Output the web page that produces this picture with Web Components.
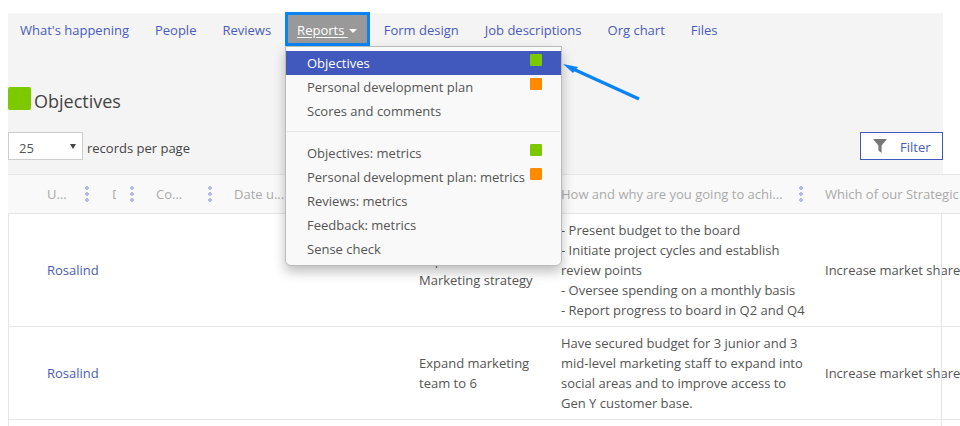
<!DOCTYPE html>
<html>
<head>
<meta charset="utf-8">
<title>Objectives</title>
<style>
	body { margin: 0; background: #fff; font-family: "Open Sans", sans-serif; font-size: 13px; color: #555; }
</style>
</head>
<body>
<app-page>
	<top-panel>
		<top-nav></top-nav>
		<page-title>Objectives</page-title>
		<list-toolbar></list-toolbar>
	</top-panel>
	<objectives-table></objectives-table>
	<reports-menu></reports-menu>
</app-page>

<script>
function define(name, html) {
	customElements.define(name, class extends HTMLElement {
		constructor() {
			super()
			this.attachShadow({ mode: 'open' }).innerHTML = html
		}
	})
}

define('app-page', `
	<style>
		:host { display: block; position: relative; width: 960px; height: 426px; box-sizing: border-box; padding-top: 13px; overflow: hidden; }
	</style>
	<slot></slot>
`)

define('top-panel', `
	<style>
		:host { display: block; margin: 0 17px 0 8px; height: 161px; background: #f4f4f4; }
	</style>
	<slot></slot>
`)

define('top-nav', `
	<style>
		:host { display: flex; height: 33px; align-items: flex-start; }
		a { color: #4a5cbb; padding: 0 13px 0 12px; margin-right: 1px; line-height: 35px; white-space: nowrap; }
		a.open { box-sizing: border-box; height: 34px; margin: -1px 2px 0 0; padding: 0 10px 0 9px; line-height: 31px; background: #999; color: #fff; border: 3px solid #0a84f5; }
		a.open u { text-underline-offset: 2px; }
		i { display: inline-block; border: 4px solid transparent; border-top-color: #fff; border-bottom: 0; vertical-align: 2px; margin-left: 1px; }
	</style>
	<a>What's happening</a><a>People</a><a>Reviews</a>
	<a class="open"><u>Reports&nbsp;<i></i></u></a>
	<a>Form design</a><a>Job descriptions</a><a>Org chart</a><a>Files</a>
`)

define('page-title', `
	<style>
		:host { display: flex; align-items: flex-start; gap: 3px; height: 24px; margin-top: 40px; font-size: 18px; line-height: 24px; color: #444; }
		b { width: 23px; height: 23px; margin-top: 1px; border-radius: 2px; background: #7dc900; }
		span { padding-top: 3px; }
	</style>
	<b></b><span><slot></slot></span>
`)

define('list-toolbar', `
	<style>
		:host { display: flex; align-items: center; height: 28px; margin-top: 22px; color: #444; }
		#select { box-sizing: border-box; width: 75px; height: 28px; display: flex; justify-content: space-between; align-items: center; padding: 0 6px 0 10px; background: #fff; border: 1px solid #ccc; color: #555; }
		#select span { padding-top: 4px; }
		#select i { border: 3px solid transparent; border-top: 5px solid #444; border-bottom: 0; }
		#label { margin-left: 4px; padding-top: 4px; }
		#filter { margin-left: auto; box-sizing: border-box; width: 83px; height: 28px; display: flex; align-items: center; gap: 13px; padding-left: 12px; background: #fff; border: 1px solid #4159bd; color: #4a5cbb; }
		#filter span { padding-top: 2px; }
	</style>
	<div id="select"><span>25</span><i></i></div>
	<span id="label">records per page</span>
	<div id="filter">
		<svg width="14" height="14" viewBox="0 0 14 14"><path d="M0 0h14L8.600 6.500V14L5.400 11.500V6.500z" fill="#777"/></svg>
		<span>Filter</span>
	</div>
`)

define('objectives-table', `
	<style>
		:host { display: block; position: relative; margin-left: 8px; width: 1100px; color: #555; }
		.row { display: grid; grid-template-columns: 39px 65px 44px 78px 185px 142px 264px 1fr; border-bottom: 1px solid #e6e6e6; background: #fff; }
		.row > div { display: flex; align-items: center; min-width: 0; }
		.head { height: 38px; background: #f9f9f9; border-top: 1px solid #e6e6e6; color: #aaa; white-space: nowrap; }
		.head span { overflow: hidden; }
		.dots { margin-left: auto; margin-right: 22px; width: 4px; height: 16px; flex: none; background: radial-gradient(circle at 2px 2px, #b5bbe6 2px, transparent 2px) 0 0 / 4px 6px repeat-y; }
		.r1 { height: 112px; }
		.r2 { height: 92px; }
		.r3 { height: 20px; }
		.user { color: #4a5cbb; }
		.text { line-height: 20px; }
		.body-lines { position: absolute; left: 0; top: 40px; bottom: 0; width: 934px; border-left: 1px solid #e6e6e6; border-right: 1px solid #e6e6e6; box-sizing: border-box; pointer-events: none; }
	</style>
	<div class="row head">
		<div></div>
		<div><span>U...</span><i class="dots" style="margin-right:23px"></i></div>
		<div><span style="width:4px">D</span><i class="dots"></i></div>
		<div><span>Co...</span><i class="dots"></i></div>
		<div><span>Date u...</span></div>
		<div></div>
		<div><span>How and why are you going to achi...</span><i class="dots"></i></div>
		<div><span>Which of our Strategic Goals</span></div>
	</div>
	<div class="row r1">
		<div></div><div class="user">Rosalind</div><div></div><div></div><div></div>
		<div class="text">Implement<br>Marketing strategy</div>
		<div class="text">- Present budget to the board<br>- Initiate project cycles and establish<br>review points<br>- Oversee spending on a monthly basis<br>- Report progress to board in Q2 and Q4</div>
		<div>Increase market share</div>
	</div>
	<div class="row r2">
		<div></div><div class="user">Rosalind</div><div></div><div></div><div></div>
		<div class="text">Expand marketing<br>team to 6</div>
		<div class="text">Have secured budget for 3 junior and 3<br>mid-level marketing staff to expand into<br>social areas and to improve access to<br>Gen Y customer base.</div>
		<div>Increase market share</div>
	</div>
	<div class="row r3"></div>
	<div class="body-lines"></div>
`)

define('reports-menu', `
	<style>
		:host { display: block; position: absolute; left: 285px; top: 46px; width: 277px; box-sizing: border-box; padding: 4px 0; background: #f9f9f9; border: 1px solid #bbb; border-radius: 0 0 6px 6px; box-shadow: 0 6px 12px rgba(0,0,0,.25); color: #555; }
		div { position: relative; height: 24px; line-height: 24px; padding-left: 21px; white-space: nowrap; }
		div.on { background: #4159bd; color: #fff; }
		b { position: absolute; right: 19px; top: 3px; width: 12px; height: 12px; border-radius: 1px; background: #7dc900; }
		b.o { background: #ff8a00; }
		hr { border: 0; border-top: 1px solid #e5e5e5; margin: 8px 1px 9px; }
		svg { position: absolute; left: 277px; top: 17px; overflow: visible; }
	</style>
	<div class="on">Objectives<b></b></div>
	<div>Personal development plan<b class="o"></b></div>
	<div>Scores and comments</div>
	<hr>
	<div>Objectives: metrics<b></b></div>
	<div>Personal development plan: metrics<b class="o"></b></div>
	<div>Reviews: metrics</div>
	<div>Feedback: metrics</div>
	<div>Sense check</div>
	<svg width="80" height="40" viewBox="0 0 80 40"><path d="M76 35L9 4.500" stroke="#0a84f5" stroke-width="3.500" fill="none"/><path d="M0 0l15 3-5 6z" fill="#0a84f5"/></svg>
`)
</script>
</body>
</html>
